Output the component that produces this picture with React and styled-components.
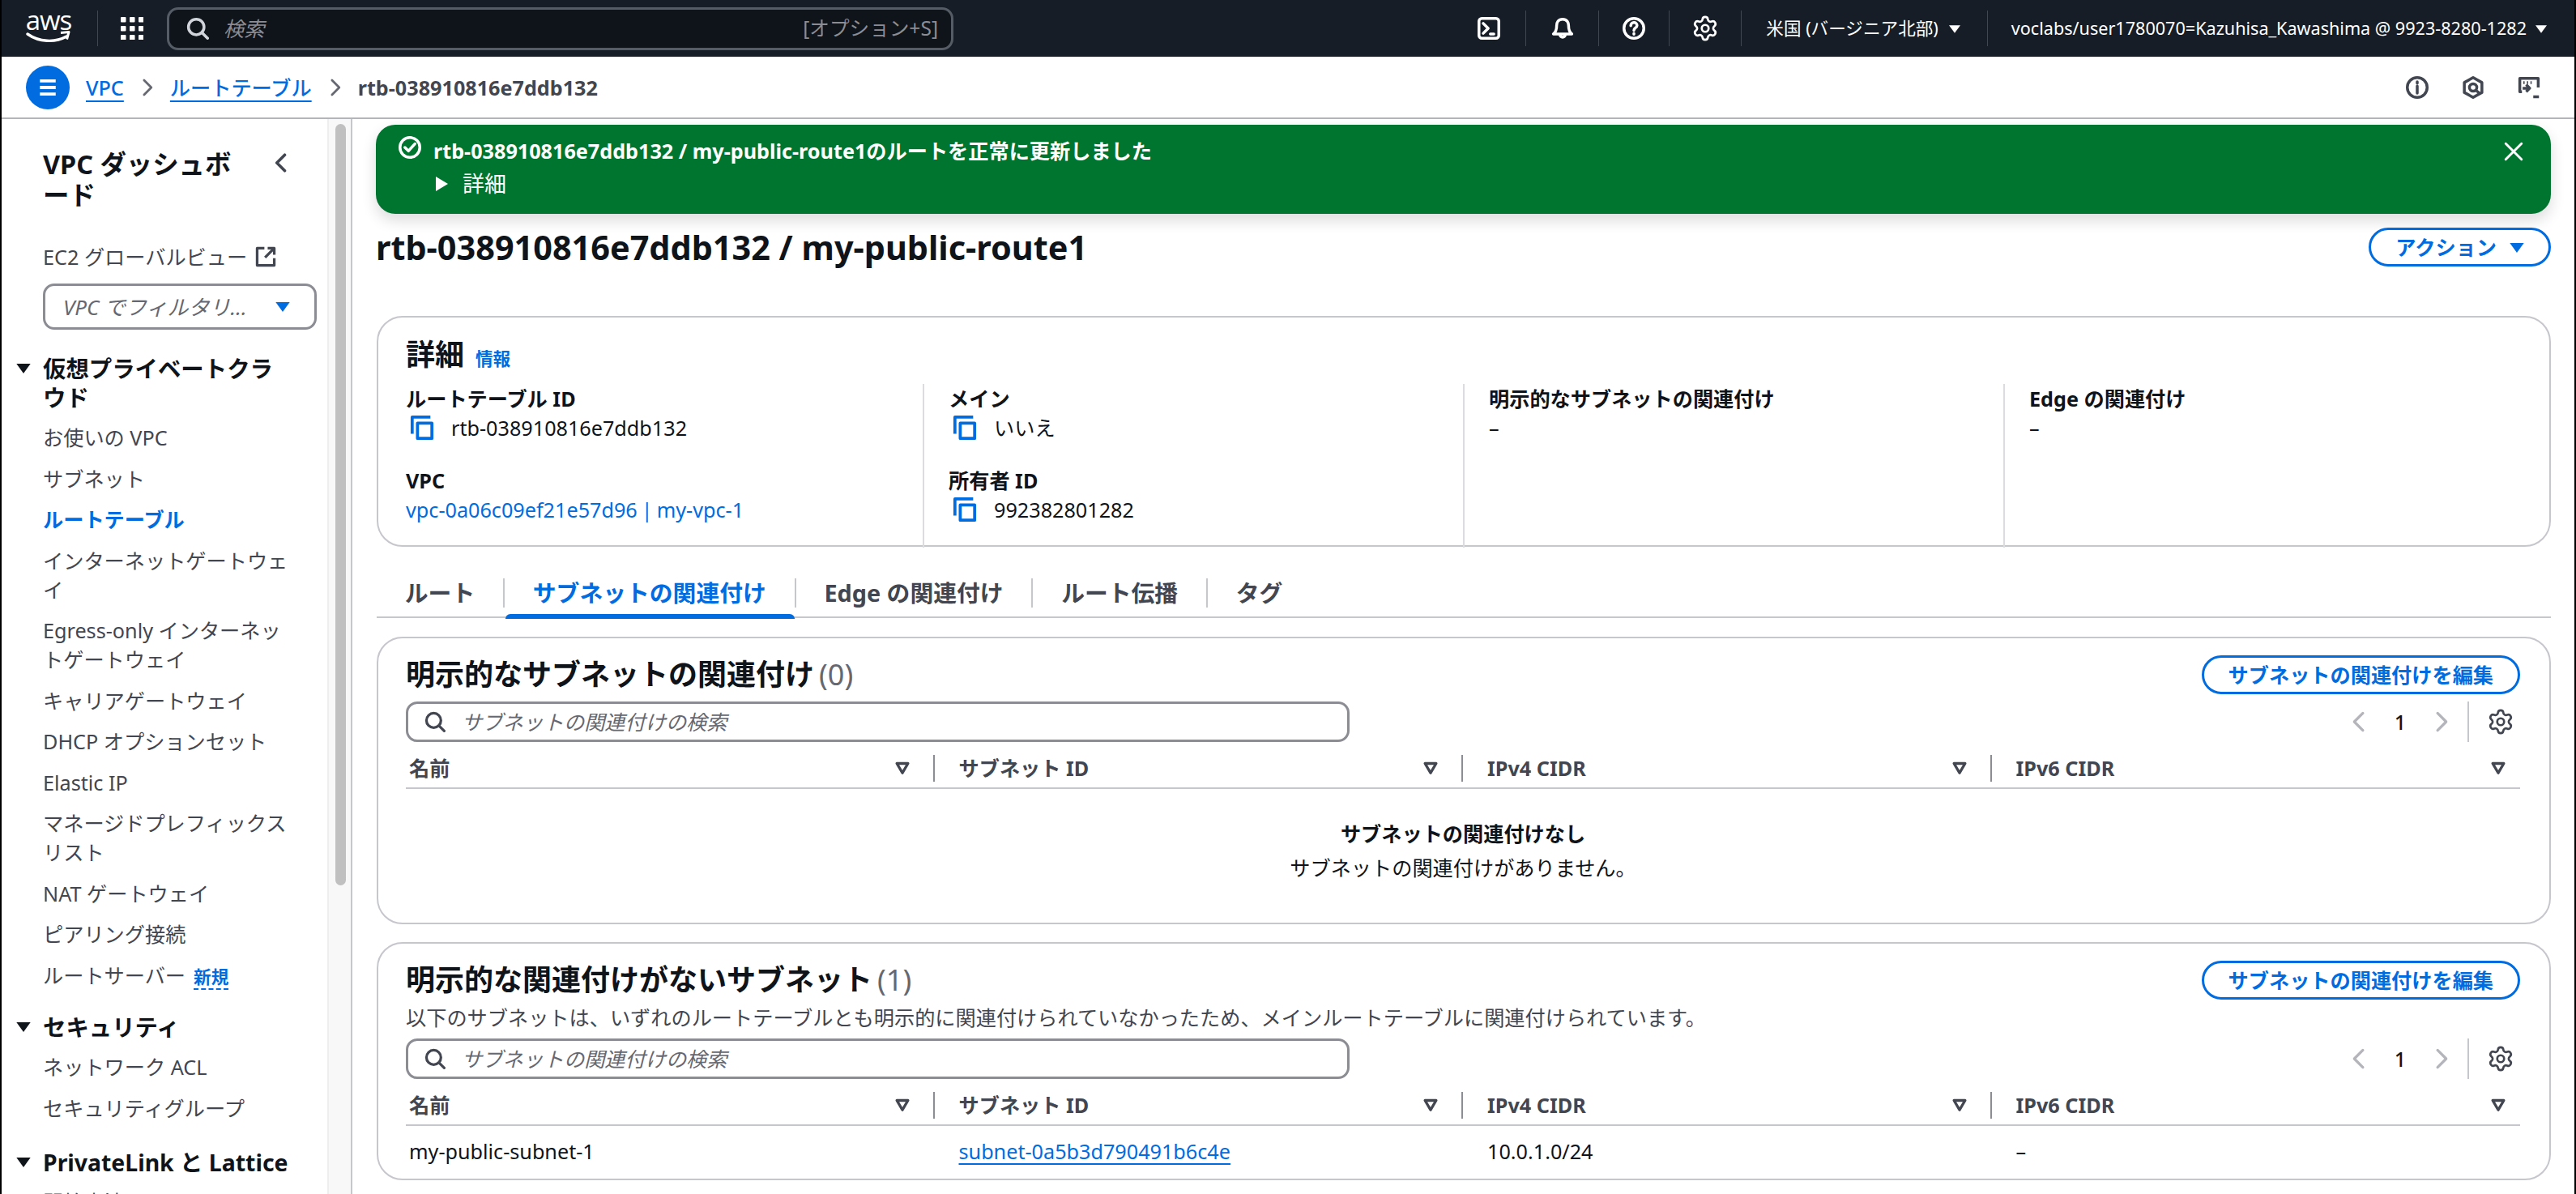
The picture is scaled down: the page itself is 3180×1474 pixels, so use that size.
import React from "react";
import styled, { createGlobalStyle } from "styled-components";
import { Settings } from "lucide-react";

const Global = createGlobalStyle`
   html, body { margin: 0; padding: 0; background: #fff; }
   body {
      font-family: "Noto Sans", "Noto Sans CJK JP", sans-serif;
      font-size: 25.2px;
      line-height: 36px;
      color: #0f141a;
   }
   * { box-sizing: border-box; }
`;

const Page = styled.div`
   display: flex;
   flex-direction: column;
   width: 3180px;
   height: 1474px;
   overflow: hidden;
   border-left: 2px solid #000;
   border-right: 2px solid #000;
`;

/* top bar */
const TopBar = styled.header`
   display: flex;
   align-items: center;
   flex: none;
   height: 70px;
   padding-left: 30px;
   background: #161d26;
   color: #fff;
`;

const Logo = styled.div`
   display: flex;
   flex-direction: column;
   align-items: center;
   width: 56px;
   height: 46px;
`;

const LogoWord = styled.span`
   font-family: "Open Sans", sans-serif;
   font-size: 33px;
   line-height: 26px;
   font-weight: 500;
   letter-spacing: -1px;
`;

const TopSep = styled.div`
   flex: none;
   width: 1px;
   height: 44px;
   background: #414750;
   margin: ${p => p.$margin || "0"};
`;

const Search = styled.div`
   display: flex;
   align-items: center;
   width: 971px;
   height: 53px;
   margin-left: 29px;
   padding: 0 16px 0 21px;
   background: #0f141a;
   border: 3px solid #565c66;
   border-radius: 14px;
`;

const SearchText = styled.span`
   flex: 1;
   margin-left: 18px;
   font-style: italic;
   font-size: 25.2px;
   color: #8c8c94;
`;

const SearchHint = styled.span`
   font-size: 24.6px;
   color: #8c8c94;
`;

const TopRight = styled.div`
   display: flex;
   align-items: center;
   margin-left: auto;
   height: 100%;
`;

const TopIcon = styled.div`
   display: flex;
   align-items: center;
   justify-content: center;
   width: ${p => p.$width}px;
`;

const TopLabel = styled.div`
   display: flex;
   align-items: center;
   font-size: 21.6px;
   color: #fff;
   white-space: nowrap;
   padding: ${p => p.$padding};
`;

const TopCaret = styled.span`
   display: block;
   margin-left: ${p => p.$gap}px;
`;

/* breadcrumb */
const Crumbs = styled.nav`
   display: flex;
   align-items: center;
   flex: none;
   height: 77px;
   padding-left: 30px;
   border-bottom: 2px solid #b4b4bb;
   background: #fff;
`;

const MenuButton = styled.div`
   display: flex;
   align-items: center;
   justify-content: center;
   width: 54px;
   height: 54px;
   border-radius: 50%;
   background: #006ce0;
   margin-right: 20px;
`;

const CrumbLink = styled.a`
   color: #006ce0;
   font-weight: 500;
   text-decoration: underline;
   text-decoration-thickness: 2px;
   text-underline-offset: 6px;
`;

const CrumbChevron = styled.span`
   display: flex;
   margin: 0 17px 0 18px;
`;

const CrumbCurrent = styled.span`
   color: #424650;
   font-weight: 700;
`;

const CrumbTools = styled.div`
   display: flex;
   align-items: center;
   gap: 41px;
   margin-left: auto;
   padding-right: 42px;
`;

/* body */
const Body = styled.div`
   display: flex;
   flex: 1;
   min-height: 0;
`;

const Nav = styled.aside`
   flex: none;
   width: 402px;
   padding: 36px 0 0 51px;
   overflow: hidden;
   background: #fff;
`;

const NavTop = styled.div`
   display: flex;
   justify-content: space-between;
   align-items: flex-start;
   width: 306px;
`;

const NavTitle = styled.div`
   width: 240px;
   font-size: 32.4px;
   line-height: 38px;
   font-weight: 700;
   color: #0f141a;
`;

const NavBack = styled.span`
   display: flex;
   margin-top: 6px;
`;

const NavItem = styled.div`
   width: 308px;
   padding: 7.25px 0;
   color: ${p => (p.$active ? "#006ce0" : "#424650")};
   font-weight: ${p => (p.$active ? 700 : 400)};
`;

const NavExternal = styled.div`
   display: flex;
   align-items: center;
   gap: 10px;
   margin-top: 40px;
   color: #424650;
`;

const NavFilter = styled.div`
   display: flex;
   align-items: center;
   justify-content: space-between;
   width: 338px;
   height: 57px;
   margin-top: 15px;
   padding: 0 30px 0 22px;
   border: 3px solid #8c8c94;
   border-radius: 14px;
   font-size: 26px;
   font-style: italic;
   color: #656871;
   white-space: nowrap;
`;

const NavSection = styled.div`
   display: flex;
   margin: ${p => p.$margin || "0"};
   margin-left: -33px;
   font-size: 28.4px;
   line-height: 36px;
   font-weight: 700;
   color: #0f141a;
`;

const NavCaret = styled.span`
   flex: none;
   width: 33px;
   padding-top: 11px;
   display: block;
`;

const NavSectionText = styled.span`
   width: 300px;
   white-space: ${p => (p.$single ? "nowrap" : "normal")};
`;

const NewTag = styled.span`
   margin-left: 10px;
   font-size: 21.6px;
   font-weight: 700;
   color: #006ce0;
   border-bottom: 2px dashed #006ce0;
`;

const Track = styled.div`
   flex: none;
   width: 31px;
   padding: 6px 6px 0 8px;
   background: #f8f8f8;
   border-left: 2px solid #eee;
   border-right: 2px solid #c6c6cd;
`;

const Thumb = styled.div`
   height: 940px;
   border-radius: 8px;
   background: #c0c0c0;
`;

const Main = styled.main`
   flex: 1;
   min-width: 0;
   padding: 7px 29px 0;
   background: #fff;
`;

const Flash = styled.div`
   display: flex;
   align-items: flex-start;
   height: 110px;
   padding: 14px 33px 0 28px;
   border-radius: 24px;
   background: #007530;
   color: #fff;
   box-shadow: 0 8px 18px rgba(0, 7, 22, 0.14);
`;

const FlashBody = styled.div`
   flex: 1;
   margin-left: 15px;
   font-weight: 700;
`;

const FlashDetail = styled.div`
   display: flex;
   align-items: center;
   gap: 18px;
   margin-top: 5px;
   margin-left: 3px;
   font-weight: 400;
   font-size: 27px;
`;

const FlashClose = styled.span`
   display: flex;
   margin-top: 6px;
`;

const TitleRow = styled.div`
   display: flex;
   align-items: center;
   justify-content: space-between;
   height: 48px;
   margin-top: 17px;
`;

const PageTitle = styled.h1`
   margin: 0;
   font-size: 41.4px;
   line-height: 48px;
   font-weight: 700;
   color: #0f141a;
`;

const OutlineButton = styled.div`
   display: flex;
   align-items: center;
   gap: 16px;
   height: 48px;
   padding: 0 30px;
   border: 3px solid #006ce0;
   border-radius: 24px;
   color: #006ce0;
   font-weight: 700;
   white-space: nowrap;
   background: #fff;
`;

const Card = styled.section`
   height: ${p => p.$height}px;
   margin-top: ${p => p.$top}px;
   margin-left: 1px;
   padding: 0 36px 0 34px;
   border: 2px solid #c6c6cd;
   border-radius: 32px;
   background: #fff;
`;

const DetailHead = styled.div`
   display: flex;
   align-items: baseline;
   gap: 14px;
   height: 78px;
   padding-top: 22px;
`;

const HeadWord = styled.span`
   font-size: 36px;
   line-height: 48px;
   font-weight: 700;
   color: #0f141a;
`;

const InfoLink = styled.a`
   font-size: 21.6px;
   font-weight: 700;
   color: #006ce0;
`;

const DetailGrid = styled.div`
   display: grid;
   grid-template-columns: 640px 667px 667px 1fr;
   height: 173px;
   margin-top: 4px;
`;

const DetailCol = styled.div`
   padding-left: ${p => (p.$first ? "0" : "30px")};
   border-right: ${p => (p.$last ? "none" : "2px solid #dcdce0")};
`;

const Field = styled.div`
   height: ${p => p.$height || 101}px;
`;

const FieldLabel = styled.div`
   font-weight: 700;
   line-height: 36px;
   color: #0f141a;
`;

const FieldValue = styled.div`
   display: flex;
   align-items: center;
   gap: 21px;
   line-height: 36px;
   color: #0f141a;
   padding-left: ${p => (p.$copy ? "5px" : "0")};
`;

const TextLink = styled.a`
   color: #006ce0;
   text-decoration: ${p => (p.$underline ? "underline" : "none")};
   text-decoration-thickness: 2px;
   text-underline-offset: 5px;
   word-spacing: -1.5px;
`;

const Tabs = styled.div`
   display: flex;
   align-items: center;
   height: 88px;
   margin-left: 1px;
   padding-top: 29px;
   border-bottom: 2px solid #c6c6cd;
`;

const Tab = styled.div`
   position: relative;
   display: flex;
   align-items: center;
   height: 36px;
   padding: 0 34.8px;
   margin-top: -2px;
   font-size: 28.8px;
   font-weight: 700;
   white-space: nowrap;
   color: ${p => (p.$active ? "#006ce0" : "#424650")};
   border-right: ${p => (p.$last ? "none" : "2px solid #c6c6cd")};

   &::after {
      content: "";
      display: ${p => (p.$active ? "block" : "none")};
      position: absolute;
      left: 1px;
      right: 0;
      bottom: -14px;
      height: 6px;
      border-radius: 6px 6px 0 0;
      background: #006ce0;
   }
`;

const CardHead = styled.div`
   display: flex;
   align-items: center;
   justify-content: space-between;
   height: 48px;
   margin-top: 21px;
`;

const CardTitle = styled.h2`
   margin: 0;
   font-size: 36px;
   line-height: 48px;
   font-weight: 700;
   color: #0f141a;
`;

const Count = styled.span`
   font-weight: 400;
   color: #656871;
   margin-left: 6px;
`;

const Description = styled.div`
   height: 36px;
   margin-top: 4px;
   color: #424650;
`;

const FilterRow = styled.div`
   display: flex;
   align-items: center;
   justify-content: space-between;
   height: 50px;
   margin-top: ${p => p.$top}px;
`;

const FilterBox = styled.div`
   display: flex;
   align-items: center;
   gap: 20px;
   width: 1165px;
   height: 50px;
   padding: 0 20px;
   border: 3px solid #8c8c94;
   border-radius: 14px;
   font-style: italic;
   color: #656871;
`;

const Pager = styled.div`
   display: flex;
   align-items: center;
   height: 50px;
   color: #0f141a;
`;

const PagerNumber = styled.span`
   width: 76px;
   text-align: center;
   font-weight: 500;
`;

const PagerGear = styled.div`
   display: flex;
   align-items: center;
   height: 100%;
   margin-left: 19px;
   padding: 0 7px 0 22px;
   border-left: 2px solid #c6c6cd;
`;

const TableHead = styled.div`
   display: grid;
   grid-template-columns: repeat(4, 1fr);
   align-items: center;
   height: 50px;
   margin-top: 8px;
   border-bottom: 2px solid #c6c6cd;
`;

const HeadCell = styled.div`
   display: flex;
   align-items: center;
   justify-content: space-between;
   height: 33px;
   padding: 0 ${p => (p.$last ? "16px" : "27px")} 0 ${p => (p.$first ? "4px" : "30px")};
   border-right: ${p => (p.$last ? "none" : "2px solid #8c8c94")};
   font-weight: 700;
   color: #424650;
`;

const TableRow = styled.div`
   display: grid;
   grid-template-columns: repeat(4, 1fr);
   align-items: center;
   height: 62px;
`;

const RowCell = styled.div`
   padding-left: ${p => (p.$first ? "4px" : "30px")};
   color: #0f141a;
`;

const Empty = styled.div`
   margin-top: 34px;
   text-align: center;
   line-height: 42px;
   color: #0f141a;
`;

const EmptyTitle = styled.div`
   font-weight: 700;
`;

/* drawn icons */
const Glyph = styled.svg`
   display: block;
   flex: none;
   fill: none;
   stroke: ${p => p.$color || "currentColor"};
   stroke-width: ${p => p.$weight || 2};
   stroke-linecap: ${p => p.$cap || "round"};
   stroke-linejoin: round;
`;

const Icon = ({ size = 28, color, weight, cap, children }) => (
   <Glyph width={size} height={size} viewBox="0 0 16 16" $color={color} $weight={weight} $cap={cap}>
      {children}
   </Glyph>
);

const SearchIcon = ({ color, size = 28 }) => (
   <Icon size={size} color={color}>
      <circle cx="7" cy="7" r="5.5" />
      <path d="M11 11l4 4" />
   </Icon>
);

const CopyIcon = () => (
   <Icon size={30} color="#006ce0" cap="butt">
      <path d="M1.5 12V1h12" />
      <rect x="5" y="5" width="9.5" height="10" />
   </Icon>
);

const Triangle = ({ color = "#fff", width = 16, height = 12 }) => (
   <svg width={width} height={height} viewBox="0 0 16 12" style={{ display: "block", flex: "none" }}>
      <path d="M0 1h16l-8 11z" fill={color} />
   </svg>
);

const SortCaret = () => (
   <Icon size={22} color="#424650" cap="butt" weight={2.4}>
      <path d="M3 4h10l-5 8.5z" />
   </Icon>
);

const Chevron = ({ dir = "right", color = "#656871", size = 26, weight = 2 }) => (
   <Icon size={size} color={color} weight={weight}>
      <path d={dir === "right" ? "M5 1.5L11.5 8 5 14.5" : "M11 1.5L4.5 8 11 14.5"} />
   </Icon>
);

const navSecurity = ["ネットワーク ACL", "セキュリティグループ"];
const navVpc = [
   "お使いの VPC",
   "サブネット",
   "ルートテーブル",
   "インターネットゲートウェイ",
   "Egress-only インターネットゲートウェイ",
   "キャリアゲートウェイ",
   "DHCP オプションセット",
   "Elastic IP",
   "マネージドプレフィックスリスト",
   "NAT ゲートウェイ",
   "ピアリング接続"
];

const columns = ["名前", "サブネット ID", "IPv4 CIDR", "IPv6 CIDR"];

const Header = () => (
   <TableHead>
      {columns.map((name, i) => (
         <HeadCell key={name} $first={i === 0} $last={i === 3}>
            {name}
            <SortCaret />
         </HeadCell>
      ))}
   </TableHead>
);

const PagerBlock = () => (
   <Pager>
      <Chevron dir="left" color="#b4b4bb" />
      <PagerNumber>1</PagerNumber>
      <Chevron color="#b4b4bb" />
      <PagerGear>
         <Settings size={34} color="#424650" strokeWidth={1.9} />
      </PagerGear>
   </Pager>
);

const NavCaretIcon = () => (
   <NavCaret>
      <Triangle color="#0f141a" width={18} height={13} />
   </NavCaret>
);

const App = () => (
   <Page>
      <Global />
      <TopBar>
         <Logo>
            <LogoWord>aws</LogoWord>
            <svg width="56" height="18" viewBox="0 0 56 18">
               <path d="M2 4c14 10 34 11 48 3" fill="none" stroke="#fff" strokeWidth="3.4" strokeLinecap="round" />
               <path d="M43 2.5l10-1-2.5 9" fill="none" stroke="#fff" strokeWidth="3" strokeLinejoin="round" />
            </svg>
         </Logo>
         <TopSep $margin="0 28px 0 32px" />
         <svg width="28" height="28" viewBox="0 0 28 28" fill="#fff" style={{ display: "block" }}>
            {[0, 11, 22].map(y =>
               [0, 11, 22].map(x => <rect key={`${x}-${y}`} x={x} y={y} width="6.5" height="6.5" rx="1" />)
            )}
         </svg>
         <Search>
            <SearchIcon color="#d1d5db" />
            <SearchText>検索</SearchText>
            <SearchHint>[オプション+S]</SearchHint>
         </Search>
         <TopRight>
            <TopIcon $width={90}>
               <Icon color="#fff">
                  <rect x="1" y="1" width="14" height="14" rx="2" />
                  <path d="M4 4.5L7.5 8 4 11.5M9 12h2.5" />
               </Icon>
            </TopIcon>
            <TopSep />
            <TopIcon $width={89}>
               <Icon color="#fff">
                  <path d="M8 1.5c-3 0-4.2 2.4-4.2 4.5 0 3-1 5-2.3 6h13c-1.3-1-2.3-3-2.3-6 0-2.1-1.2-4.5-4.2-4.5zM6.2 12.5a1.8 1.8 0 0 0 3.6 0" />
               </Icon>
            </TopIcon>
            <TopSep />
            <TopIcon $width={86}>
               <Icon color="#fff">
                  <circle cx="8" cy="8" r="7" />
                  <path d="M5.8 6.2c0-3 4.4-3 4.4-.2 0 1.7-2.2 1.7-2.2 3.4M8 11.5v.6" />
               </Icon>
            </TopIcon>
            <TopSep />
            <TopIcon $width={88}>
               <Settings size={34} color="#fff" strokeWidth={1.9} />
            </TopIcon>
            <TopSep />
            <TopLabel $padding="0 33px 0 30px">
               米国 (バージニア北部)
               <TopCaret $gap={13}>
                  <Triangle width={14} height={11} />
               </TopCaret>
            </TopLabel>
            <TopSep />
            <TopLabel $padding="0 34px 0 29px">
               voclabs/user1780070=Kazuhisa_Kawashima @ 9923-8280-1282
               <TopCaret $gap={11}>
                  <Triangle width={14} height={11} />
               </TopCaret>
            </TopLabel>
         </TopRight>
      </TopBar>

      <Crumbs>
         <MenuButton>
            <Icon size={26} color="#fff" weight={2.4} cap="butt">
               <path d="M2 3h12M2 8h12M2 13h12" />
            </Icon>
         </MenuButton>
         <CrumbLink>VPC</CrumbLink>
         <CrumbChevron>
            <Chevron size={22} />
         </CrumbChevron>
         <CrumbLink>ルートテーブル</CrumbLink>
         <CrumbChevron>
            <Chevron size={22} />
         </CrumbChevron>
         <CrumbCurrent>rtb-038910816e7ddb132</CrumbCurrent>
         <CrumbTools>
            <Icon color="#424650">
               <circle cx="8" cy="8" r="7" />
               <path d="M8 7v5M8 4v1" />
            </Icon>
            <Icon color="#424650">
               <path d="M8 1l6.2 3.5v7L8 15l-6.2-3.5v-7z" />
               <circle cx="8" cy="8" r="2.6" />
               <path d="M10 10l2 1.6" />
            </Icon>
            <Icon color="#424650" cap="butt">
               <path d="M3 11H1.5V1.5h13V8" />
               <path d="M4 4.5h.9M6.5 4.5h.9M9 4.5h.9" />
               <path d="M3.5 8.5h4.5M6 6l2.5 2.5L6 11M11 14.5h4" />
            </Icon>
         </CrumbTools>
      </Crumbs>

      <Body>
         <Nav>
            <NavTop>
               <NavTitle>VPC ダッシュボード</NavTitle>
               <NavBack>
                  <Chevron dir="left" color="#424650" size={24} weight={2.4} />
               </NavBack>
            </NavTop>
            <NavExternal>
               EC2 グローバルビュー
               <Icon size={26} color="#424650" cap="butt">
                  <path d="M14.5 9v5.5h-13v-13H7M9.5 1.5h5v5M14.5 1.5L7.5 8.5" />
               </Icon>
            </NavExternal>
            <NavFilter>
               VPC でフィルタリ...
               <Triangle color="#006ce0" width={18} height={13} />
            </NavFilter>
            <NavSection $margin="30px 0 6px">
               <NavCaretIcon />
               <NavSectionText>仮想プライベートクラウド</NavSectionText>
            </NavSection>
            {navVpc.map(name => (
               <NavItem key={name} $active={name === "ルートテーブル"}>
                  {name}
               </NavItem>
            ))}
            <NavItem>
               ルートサーバー
               <NewTag>新規</NewTag>
            </NavItem>
            <NavSection $margin="19px 0 6px">
               <NavCaretIcon />
               <NavSectionText>セキュリティ</NavSectionText>
            </NavSection>
            {navSecurity.map(name => (
               <NavItem key={name}>{name}</NavItem>
            ))}
            <NavSection $margin="24px 0 6px">
               <NavCaretIcon />
               <NavSectionText $single>PrivateLink と Lattice</NavSectionText>
            </NavSection>
            <NavItem>開始方法</NavItem>
         </Nav>
         <Track>
            <Thumb />
         </Track>
         <Main>
            <Flash>
               <Icon size={28} color="#fff">
                  <circle cx="8" cy="8" r="7" />
                  <path d="M4.5 8l2.5 2.5 4.5-5" />
               </Icon>
               <FlashBody>
                  rtb-038910816e7ddb132 / my-public-route1のルートを正常に更新しました
                  <FlashDetail>
                     <svg width="15" height="18" viewBox="0 0 15 18" style={{ display: "block" }}>
                        <path d="M0 0l15 9-15 9z" fill="#fff" />
                     </svg>
                     詳細
                  </FlashDetail>
               </FlashBody>
               <FlashClose>
                  <Icon size={26} color="#fff" weight={1.8}>
                     <path d="M2 2l12 12M14 2L2 14" />
                  </Icon>
               </FlashClose>
            </Flash>

            <TitleRow>
               <PageTitle>rtb-038910816e7ddb132 / my-public-route1</PageTitle>
               <OutlineButton>
                  アクション
                  <Triangle color="#006ce0" width={18} height={13} />
               </OutlineButton>
            </TitleRow>

            <Card $height={285} $top={61}>
               <DetailHead>
                  <HeadWord>詳細</HeadWord>
                  <InfoLink>情報</InfoLink>
               </DetailHead>
               <DetailGrid>
                  <DetailCol $first>
                     <Field>
                        <FieldLabel>ルートテーブル ID</FieldLabel>
                        <FieldValue $copy>
                           <CopyIcon />
                           rtb-038910816e7ddb132
                        </FieldValue>
                     </Field>
                     <Field>
                        <FieldLabel>VPC</FieldLabel>
                        <FieldValue>
                           <TextLink>vpc-0a06c09ef21e57d96 | my-vpc-1</TextLink>
                        </FieldValue>
                     </Field>
                  </DetailCol>
                  <DetailCol>
                     <Field>
                        <FieldLabel>メイン</FieldLabel>
                        <FieldValue $copy>
                           <CopyIcon />
                           いいえ
                        </FieldValue>
                     </Field>
                     <Field>
                        <FieldLabel>所有者 ID</FieldLabel>
                        <FieldValue $copy>
                           <CopyIcon />
                           992382801282
                        </FieldValue>
                     </Field>
                  </DetailCol>
                  <DetailCol>
                     <FieldLabel>明示的なサブネットの関連付け</FieldLabel>
                     <FieldValue>–</FieldValue>
                  </DetailCol>
                  <DetailCol $last>
                     <FieldLabel>Edge の関連付け</FieldLabel>
                     <FieldValue>–</FieldValue>
                  </DetailCol>
               </DetailGrid>
            </Card>

            <Tabs>
               <Tab>ルート</Tab>
               <Tab $active>サブネットの関連付け</Tab>
               <Tab>Edge の関連付け</Tab>
               <Tab>ルート伝播</Tab>
               <Tab $last>タグ</Tab>
            </Tabs>

            <Card $height={355} $top={23}>
               <CardHead>
                  <CardTitle>
                     明示的なサブネットの関連付け<Count>(0)</Count>
                  </CardTitle>
                  <OutlineButton>サブネットの関連付けを編集</OutlineButton>
               </CardHead>
               <FilterRow $top={9}>
                  <FilterBox>
                     <SearchIcon color="#424650" size={26} />
                     サブネットの関連付けの検索
                  </FilterBox>
                  <PagerBlock />
               </FilterRow>
               <Header />
               <Empty>
                  <EmptyTitle>サブネットの関連付けなし</EmptyTitle>
                  サブネットの関連付けがありません。
               </Empty>
            </Card>

            <Card $height={294} $top={22}>
               <CardHead>
                  <CardTitle>
                     明示的な関連付けがないサブネット<Count>(1)</Count>
                  </CardTitle>
                  <OutlineButton>サブネットの関連付けを編集</OutlineButton>
               </CardHead>
               <Description>
                  以下のサブネットは、いずれのルートテーブルとも明示的に関連付けられていなかったため、メインルートテーブルに関連付けられています。
               </Description>
               <FilterRow $top={8}>
                  <FilterBox>
                     <SearchIcon color="#424650" size={26} />
                     サブネットの関連付けの検索
                  </FilterBox>
                  <PagerBlock />
               </FilterRow>
               <Header />
               <TableRow>
                  <RowCell $first>my-public-subnet-1</RowCell>
                  <RowCell>
                     <TextLink $underline>subnet-0a5b3d790491b6c4e</TextLink>
                  </RowCell>
                  <RowCell>10.0.1.0/24</RowCell>
                  <RowCell>–</RowCell>
               </TableRow>
            </Card>
         </Main>
      </Body>
   </Page>
);

export default App;
